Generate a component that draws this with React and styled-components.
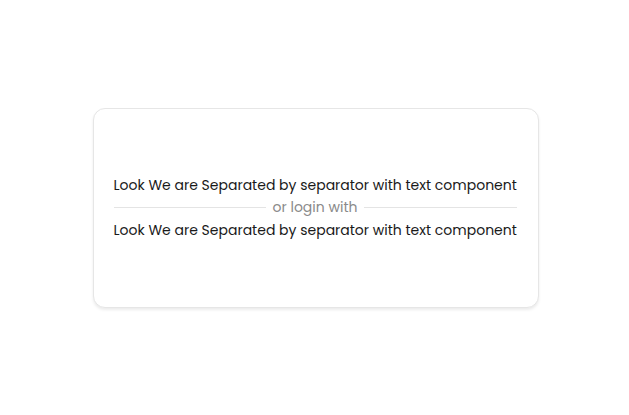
import React from "react";
import styled, { createGlobalStyle } from "styled-components";

const Global = createGlobalStyle`
  html, body {
    margin: 0;
    padding: 0;
    background: #fff;
  }
  body {
    font-family: "Poppins", "Inter", "Noto Sans", sans-serif;
  }
`;

const Page = styled.div`
  height: 415px;
  padding-left: 2px;
  box-sizing: border-box;
  display: flex;
  align-items: center;
  justify-content: center;
`;

const Card = styled.div`
  box-sizing: border-box;
  width: 446px;
  height: 200px;
  padding: 0 21px 1px 20px;
  display: flex;
  flex-direction: column;
  justify-content: center;
  border: 1px solid #e6e6e6;
  border-radius: 12px;
  box-shadow: 0 2px 3px rgba(0, 0, 0, 0.08);
  background: #fff;
`;

const Line = styled.div`
  font-size: 14px;
  line-height: 22px;
  color: #1a1a1a;
  white-space: nowrap;
`;

const Separator = styled.div`
  display: flex;
  align-items: center;
  gap: 7px;
  font-size: 14px;
  line-height: 23px;
  color: #8a8a8a;
  &::before,
  &::after {
    content: "";
    flex: 1;
    height: 1px;
    background: #e4e4e4;
  }
`;

export default function App() {
  return (
    <>
      <Global />
      <Page>
        <Card>
          <Line>Look We are Separated by separator with text component</Line>
          <Separator>or login with</Separator>
          <Line>Look We are Separated by separator with text component</Line>
        </Card>
      </Page>
    </>
  );
}
